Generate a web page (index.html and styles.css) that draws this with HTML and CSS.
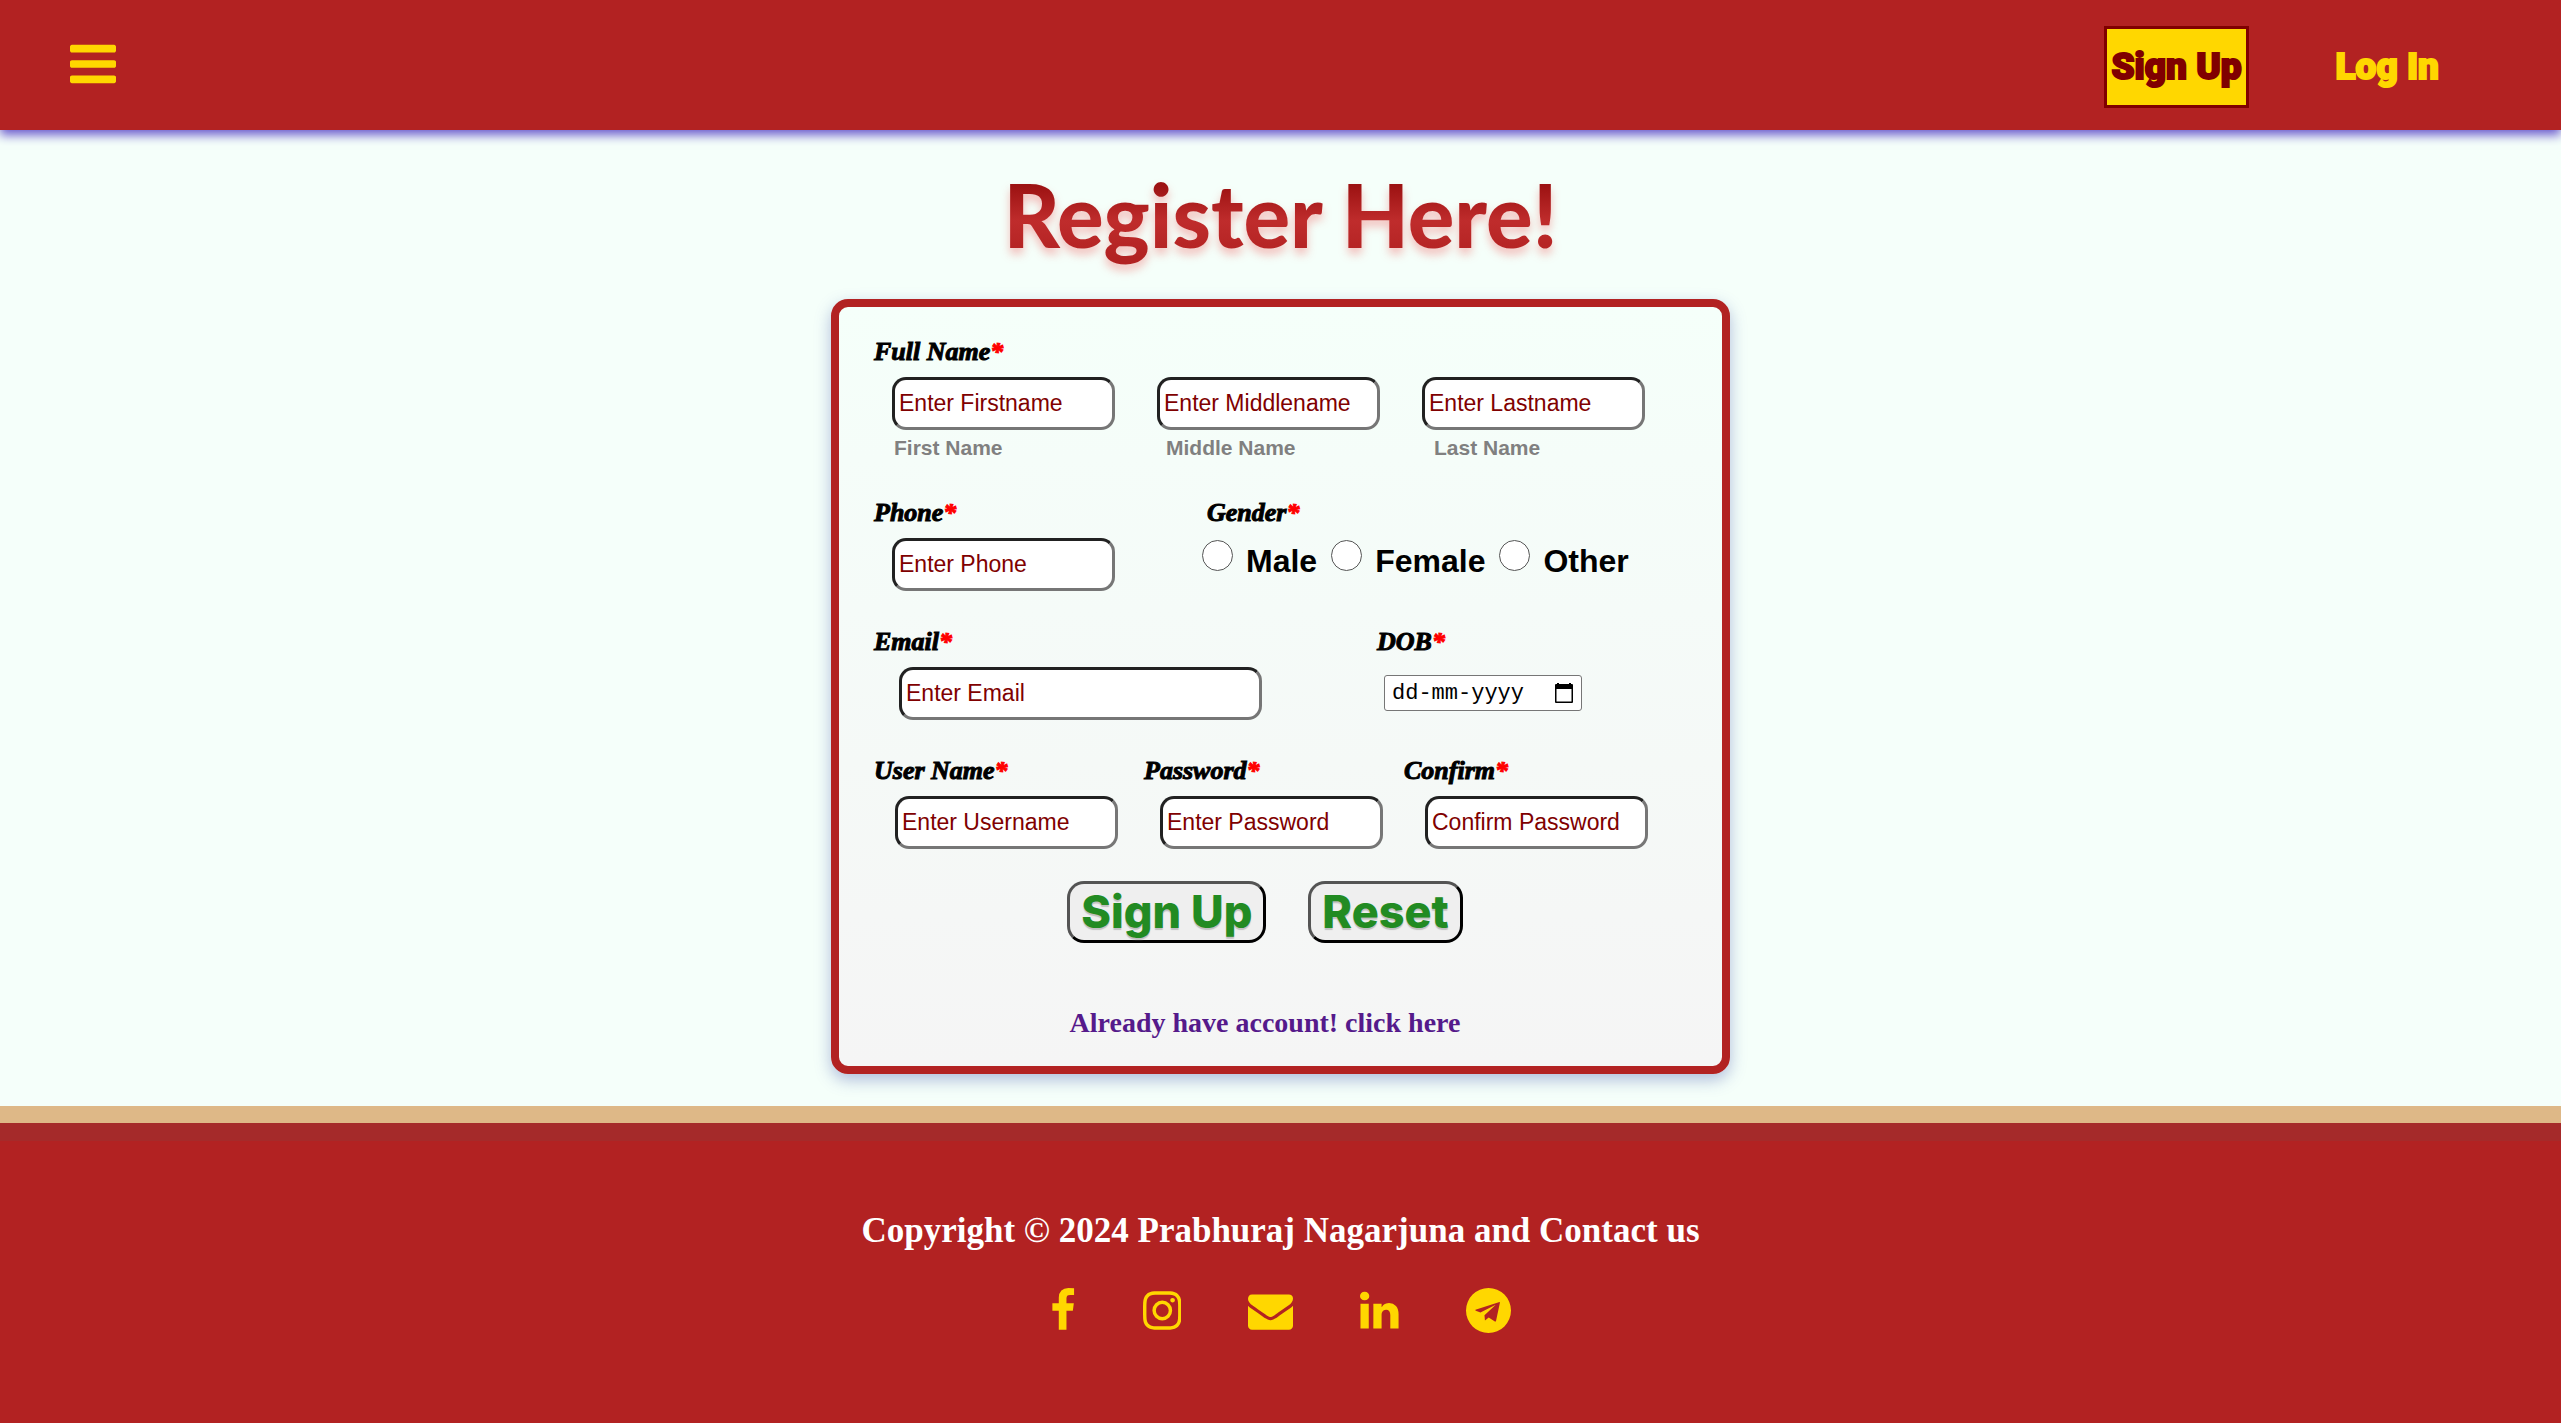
FILE: index.html
```html
<!DOCTYPE html>
<html lang="en">
<head>
<meta charset="utf-8">
<meta name="viewport" content="width=device-width, initial-scale=1">
<title>Register</title>
<link rel="stylesheet" href="styles.css">
</head>
<body>
<header class="topbar">
  <button class="menu-button" type="button" aria-label="Menu">
    <svg viewBox="128 128 1536 1536" aria-hidden="true"><path d="M1664 1344v128q0 26-19 45t-45 19h-1408q-26 0-45-19t-19-45v-128q0-26 19-45t45-19h1408q26 0 45 19t19 45zm0-512v128q0 26-19 45t-45 19h-1408q-26 0-45-19t-19-45v-128q0-26 19-45t45-19h1408q26 0 45 19t19 45zm0-512v128q0 26-19 45t-45 19h-1408q-26 0-45-19t-19-45v-128q0-26 19-45t45-19h1408q26 0 45 19t19 45z"/></svg>
  </button>
  <nav class="nav">
    <a class="nav-link nav-link-active" href="#signup">Sign Up</a>
    <a class="nav-link" href="#login">Log In</a>
  </nav>
</header>

<main class="main">
  <h1 class="title">Register Here!</h1>
  <form class="card" id="signup">
    <fieldset class="row row-names">
      <legend class="label">Full Name<span class="star">*</span></legend>
      <div class="triple">
        <div class="name-field">
          <input class="text-input" id="first" type="text" placeholder="Enter Firstname">
          <label class="hint hint-first" for="first">First Name</label>
        </div>
        <div class="name-field">
          <input class="text-input" id="middle" type="text" placeholder="Enter Middlename">
          <label class="hint hint-middle" for="middle">Middle Name</label>
        </div>
        <div class="name-field">
          <input class="text-input" id="last" type="text" placeholder="Enter Lastname">
          <label class="hint hint-last" for="last">Last Name</label>
        </div>
      </div>
    </fieldset>

    <div class="row row-phone">
      <div class="field">
        <label class="label" for="phone">Phone<span class="star">*</span></label>
        <input class="text-input indent" id="phone" type="tel" placeholder="Enter Phone">
      </div>
      <fieldset class="field">
        <legend class="label gender-label">Gender<span class="star">*</span></legend>
        <div class="radios">
          <label class="radio"><input class="radio-input" type="radio" name="gender">Male</label>
          <label class="radio"><input class="radio-input" type="radio" name="gender">Female</label>
          <label class="radio"><input class="radio-input" type="radio" name="gender">Other</label>
        </div>
      </fieldset>
    </div>

    <div class="row row-email">
      <div class="field">
        <label class="label" for="email">Email<span class="star">*</span></label>
        <input class="text-input wide" id="email" type="email" placeholder="Enter Email">
      </div>
      <div class="field">
        <label class="label" for="dob">DOB<span class="star">*</span></label>
        <div class="date-box">
          <input class="date-input" id="dob" type="text" placeholder="dd-mm-yyyy">
          <svg class="calendar" viewBox="0 0 20 20" aria-hidden="true"><path fill-rule="evenodd" d="M2 1h1V0h2v1h10V0h2v1h1a1 1 0 0 1 1 1v17a1 1 0 0 1-1 1H2a1 1 0 0 1-1-1V2a1 1 0 0 1 1-1zM2.500 6v12.500h15V6z"/></svg>
        </div>
      </div>
    </div>

    <div class="row row-login">
      <div class="login-labels">
        <label class="label" for="user">User Name<span class="star">*</span></label>
        <label class="label" for="password">Password<span class="star">*</span></label>
        <label class="label" for="confirm">Confirm<span class="star">*</span></label>
      </div>
      <div class="triple triple-login">
        <input class="text-input" id="user" type="text" placeholder="Enter Username">
        <input class="text-input" id="password" type="password" placeholder="Enter Password">
        <input class="text-input" id="confirm" type="password" placeholder="Confirm Password">
      </div>
    </div>

    <div class="actions">
      <button class="button" type="submit">Sign Up</button>
      <button class="button" type="reset">Reset</button>
    </div>
    <a class="account-link" href="#login">Already have account! click here</a>
  </form>
</main>

<footer class="footer">
  <h2 class="copyright">Copyright © 2024 Prabhuraj Nagarjuna and Contact us</h2>
  <div class="social">
    <a class="social-link" href="#facebook" aria-label="Facebook"><svg viewBox="384 0 1024 1792"><path d="M1343 12v264h-157q-86 0-116 36t-30 108v189h293l-39 296h-254v759h-306v-759h-255v-296h255v-218q0-186 104-288.500t277-102.500q147 0 228 12z"/></svg></a>
    <a class="social-link" href="#instagram" aria-label="Instagram"><svg viewBox="128 0 1536 1792"><path d="M1152 896q0-106-75-181t-181-75-181 75-75 181 75 181 181 75 181-75 75-181zm138 0q0 164-115 279t-279 115-279-115-115-279 115-279 279-115 279 115 115 279zm108-410q0 38-27 65t-65 27-65-27-27-65 27-65 65-27 65 27 27 65zm-502-220q-7 0-76.500-.5t-105.500 0-96.500 3-103 10-71.500 18.500q-50 20-88 58t-58 88q-11 29-18.500 71.500t-10 103-3 96.500 0 105.500 .5 76.500-.5 76.500 0 105.500 3 96.500 10 103 18.500 71.500q20 50 58 88t88 58q29 11 71.500 18.500t103 10 96.500 3 105.500 0 76.500-.5 76.500 .5 105.500 0 96.500-3 103-10 71.500-18.500q50-20 88-58t58-88q11-29 18.500-71.500t10-103 3-96.500 0-105.500-.5-76.500 .5-76.500 0-105.500-3-96.500-10-103-18.500-71.500q-20-50-58-88t-88-58q-29-11-71.500-18.500t-103-10-96.500-3-105.500 0-76.500 .5zm768 630q0 229-5 317-10 208-124 322t-322 124q-88 5-317 5t-317-5q-208-10-322-124t-124-322q-5-88-5-317t5-317q10-208 124-322t322-124q88-5 317-5t317 5q208 10 322 124t124 322q5 88 5 317z"/></svg></a>
    <a class="social-link" href="#mail" aria-label="Email"><svg viewBox="0 0 1792 1792"><path d="M1792 710v794q0 66-47 113t-113 47h-1472q-66 0-113-47t-47-113v-794q44 49 101 87 362 246 497 345 57 42 92.500 65.500t94.500 48 110 24.500h2q51 0 110-24.500t94.500-48 92.500-65.500q170-123 498-345 57-39 100-87zm0-294q0 79-49 151t-122 123q-376 261-468 325-10 7-42.500 30.500t-54 38-52 32.500-57.500 27-50 9h-2q-23 0-50-9t-57.500-27-52-32.500-54-38-42.500-30.500q-91-64-262-182.500t-205-142.500q-62-42-117-115.500t-55-136.500q0-78 41.500-130t118.500-52h1472q65 0 112.500 47t47.500 113z"/></svg></a>
    <a class="social-link" href="#linkedin" aria-label="LinkedIn"><svg viewBox="128 0 1536 1792"><path d="M477 625v991h-330v-991h330zm21-306q1 73-50.500 122t-135.500 49h-2q-82 0-132-49t-50-122q0-74 51.500-122.500t134.500-48.500 133 48.500 51 122.500zm1166 729v568h-329v-530q0-105-40.500-164.500t-126.500-59.500q-63 0-105.500 34.500t-63.500 85.500q-11 30-11 81v553h-329q2-399 2-647t-1-296l-1-48h329v144h-2q20-32 41-56t56.500-52 87-43.500 114.500-15.500q171 0 275 113.500t104 332.500z"/></svg></a>
    <a class="social-link" href="#telegram" aria-label="Telegram"><svg viewBox="0 0 1792 1792"><path fill-rule="evenodd" d="M896 0a896 896 0 1 0 0 1792a896 896 0 1 0 0-1792zM1335 560L375 870Q360 890 390 905L575 975L1185 670L735 1085L755 1290L905 1175L1150 1330Q1185 1350 1195 1310L1350 590Q1355 560 1335 560z"/></svg></a>
  </div>
</footer>
</body>
</html>
```
FILE: styles.css
```css
* { box-sizing: border-box; }

body {
  margin: 0;
  min-height: 100vh;
  display: flex;
  flex-direction: column;
  background: mintcream;
  font-family: "Liberation Sans", Arial, sans-serif;
}

.topbar {
  position: relative;
  display: flex;
  align-items: center;
  justify-content: space-between;
  height: 130px;
  padding: 0 115px 0 70px;
  background: firebrick;
  box-shadow: 0 5px 10px slateblue;
}

.menu-button {
  padding: 0 0 2px;
  border: 0;
  background: none;
}

.menu-button svg {
  display: block;
  width: 46px;
  height: 46px;
  fill: gold;
}

.nav {
  display: flex;
  align-items: center;
  gap: 80px;
  padding-top: 4px;
}

.nav-link {
  padding: 0 4px;
  border: 3px solid transparent;
  color: gold;
  font: 900 37px/76px Roboto, sans-serif;
  text-align: center;
  text-decoration: none;
  -webkit-text-stroke: 2px currentColor;
}

.nav-link-active {
  min-width: 144px;
  border-color: maroon;
  background: gold;
  color: maroon;
}

.main {
  display: flex;
  flex-direction: column;
  align-items: center;
  padding: 25px 24px 32px;
}

.title {
  margin: 0 0 24px;
  background: linear-gradient(#9c1212 25%, #bf2c2c 55%, #b22222 85%);
  background-clip: text;
  -webkit-background-clip: text;
  color: transparent;
  filter: drop-shadow(0 6px 5px rgba(240, 90, 90, 0.4));
  font: 900 87px/120px Lato, sans-serif;
}

.card {
  display: flex;
  flex-direction: column;
  width: 100%;
  max-width: 899px;
  padding: 29px 35px 27px;
  border: 8px solid firebrick;
  border-radius: 17px;
  background: linear-gradient(mintcream, whitesmoke);
  box-shadow: 0 6px 16px rgba(72, 91, 175, 0.4);
}

fieldset {
  min-width: 0;
  margin: 0;
  padding: 0;
  border: 0;
}

.label {
  display: block;
  padding: 0;
  margin-bottom: 9px;
  color: #000;
  font: italic bold 26px/32px "Liberation Serif", serif;
  -webkit-text-stroke: 1px currentColor;
}

.star { color: red; }

.row-names { margin-bottom: 37px; }

.triple {
  display: grid;
  grid-template-columns: repeat(3, 223px);
  gap: 42px;
  padding-left: 18px;
}

.triple-login { padding-left: 21px; }

.text-input {
  display: block;
  width: 223px;
  height: 53px;
  padding: 0 4px;
  border: 3px inset #767676;
  border-radius: 14px;
  background: #fff;
  font: 23px "Liberation Sans", Arial, sans-serif;
}

.text-input::placeholder {
  color: maroon;
  opacity: 1;
}

.indent { margin-left: 18px; }

.wide {
  width: 363px;
  margin-left: 25px;
}

.hint {
  display: block;
  margin-top: 6px;
  color: gray;
  font-weight: bold;
  font-size: 21px;
  line-height: 24px;
}

.hint-first { padding-left: 2px; }
.hint-middle { padding-left: 9px; }
.hint-last { padding-left: 12px; }

.row-phone,
.row-email {
  display: flex;
  margin-bottom: 35px;
}

.row-phone { gap: 86px; }
.row-email { gap: 115px; }

.gender-label { margin-left: 6px; }

.radios {
  display: flex;
  gap: 14px;
  padding-left: 1px;
}

.radio {
  display: flex;
  gap: 13px;
  font-weight: bold;
  font-size: 32px;
  line-height: 46px;
}

.radio-input {
  appearance: none;
  width: 31px;
  height: 31px;
  margin: 2px 0 0;
  border: 1px solid #555;
  border-radius: 50%;
  background: #fff;
}

.date-box {
  display: flex;
  align-items: center;
  width: 198px;
  height: 36px;
  margin: 17px 0 0 7px;
  padding: 0 7px;
  border: 1px solid #767676;
  border-radius: 3px;
  background: #fff;
}

.date-input {
  flex: 1;
  min-width: 0;
  padding: 0;
  border: 0;
  background: none;
  font: 22px "Liberation Mono", monospace;
}

.date-input::placeholder {
  color: #000;
  opacity: 1;
}

.calendar {
  width: 20px;
  height: 20px;
}

.login-labels {
  display: grid;
  grid-template-columns: 270px 260px 1fr;
}

.actions {
  display: flex;
  justify-content: center;
  gap: 42px;
  margin: 32px 31px 0 0;
}

.button {
  height: 62px;
  padding: 0 11px;
  border: 3px outset #000;
  border-radius: 17px;
  background: #efefef;
  color: forestgreen;
  font: 800 45px/48px Inter, sans-serif;
  text-shadow: 0 2px 1px silver;
}

.account-link {
  margin: 64px 31px 0 0;
  color: #551a8b;
  font: bold 28px/32px "Liberation Serif", serif;
  text-align: center;
  text-decoration: none;
}

.footer {
  flex: 1;
  display: flex;
  flex-direction: column;
  align-items: center;
  gap: 36px;
  padding: 87px 24px 48px;
  border-top: 17px solid burlywood;
  background: firebrick;
  box-shadow: inset 0 18px brown;
}

.copyright {
  margin: 0;
  color: #fff;
  font: bold 35px/42px "Liberation Serif", serif;
  text-align: center;
}

.social {
  display: flex;
  gap: 67px;
}

.social-link svg {
  display: block;
  height: 45px;
  fill: gold;
}
```
